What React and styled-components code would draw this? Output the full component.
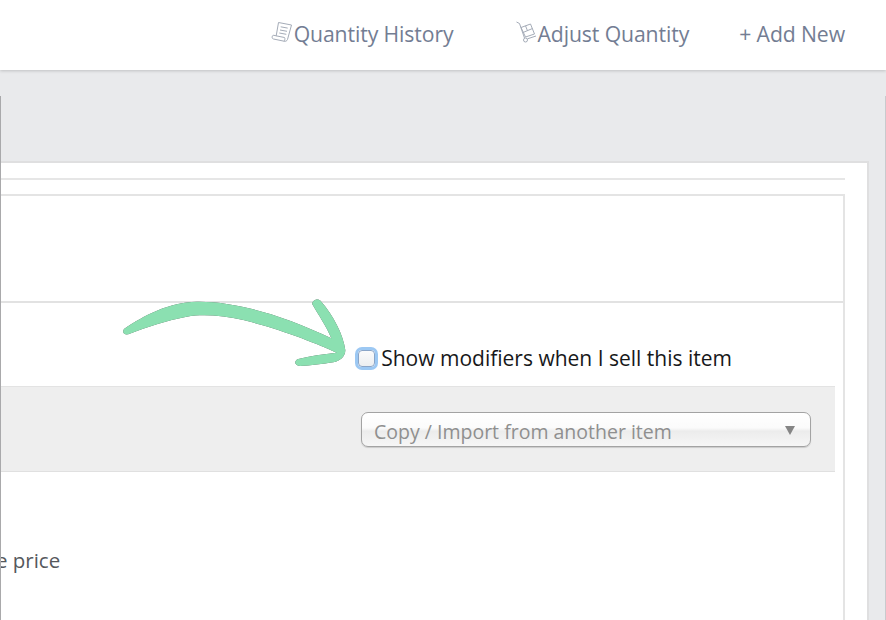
import React from "react";
import styled, { createGlobalStyle } from "styled-components";

const Global = createGlobalStyle`
  html, body { margin: 0; padding: 0; width: 886px; height: 620px; overflow: hidden; background: #e9eaec; font-family: "Open Sans", "Noto Sans", sans-serif; }
  * { box-sizing: border-box; }
`;
const Page = styled.div`position: relative; width: 886px; height: 620px; overflow: hidden; background: #e9eaec;`;
const Header = styled.header`
  position: relative; z-index: 1; height: 70px; background: #fff; box-shadow: 0 1px 3px rgba(0,0,0,.18);
  display: flex; justify-content: flex-end; align-items: center; padding: 0 41px 3px 0;
`;
const NavItem = styled.a`display: flex; align-items: center; gap: ${p => p.$gap}px; margin-left: ${p => p.$space}px; font-size: 21.2px; color: #737d93; letter-spacing: -.1px; white-space: nowrap;`;
const NavIcon = styled.svg`width: 22px; height: 22px; flex: none; fill: none; stroke: #a5acb8; stroke-width: 1; margin-top: -3px;`;
const Main = styled.main`
  margin-top: 26px; height: 524px; border-left: 1px solid #a9a9ab; border-right: 1px solid #c9cacd; padding: 65px 16px 0 0;
`;
const Card = styled.section`background: #fff; height: 461px; border: 2px solid #dfdfe0; border-left: 0; border-bottom: 0; padding: 15px 22px 0 0;`;
const Rule = styled.div`height: 2px; background: #e6e6e6;`;
const Box = styled.div`margin-top: 14px; height: 431px; border: 2px solid #e4e4e4; border-left: 0; border-bottom: 0; padding-right: 8px;`;
const BoxHead = styled.div`height: 107px; border-bottom: 2px solid #e2e2e2; margin-right: -8px;`;
const CheckRow = styled.div`height: 83px; display: flex; align-items: center; justify-content: flex-end; padding: 27px 103px 0 0; gap: 6px;`;
const Check = styled.span`width: 17px; height: 17px; border-radius: 4px; border: 1px solid #8aa5c8; background: linear-gradient(#fbfbfc,#eceef0); box-shadow: 0 0 0 3px #9cc8f3;`;
const CheckLabel = styled.label`font-size: 21px; color: #17181a; white-space: nowrap;`;
const Band = styled.div`height: 86px; background: #eeeeee; border-top: 1px solid #e3e3e3; border-bottom: 1px solid #e0e0e0; display: flex; justify-content: flex-end; align-items: center; padding: 0 24px 0 0;`;
const SelectBox = styled.div`
  width: 450px; height: 35px; border: 1px solid #a3a3a3; border-radius: 7px; display: flex; align-items: center; justify-content: space-between;
  padding: 5px 15px 0 12px; background: linear-gradient(#ffffff 0%, #fbfbfb 45%, #ececec 55%, #f6f6f6 100%); box-shadow: 0 1px 1px rgba(0,0,0,.15);
  font-size: 19.5px; color: #8f8f8f; white-space: nowrap;
`;
const Caret = styled.span`width: 0; height: 0; border-left: 5px solid transparent; border-right: 5px solid transparent; border-top: 9px solid #858585; margin-top: -3px;`;
const PriceRow = styled.div`padding: 74px 0 0; overflow: hidden; font-size: 20.5px; color: #55585c; line-height: 28px;`;
const PriceText = styled.span`display: block; margin-left: -25px; white-space: nowrap;`;
const Arrow = styled.svg`position: absolute; left: 110px; top: 285px; width: 290px; height: 100px; pointer-events: none; filter: drop-shadow(.8px .8px .6px rgba(50,50,50,.8));`;

export default function App() {
  return (
    <Page>
      <Global />
      <Header>
        <NavItem $gap={1} $space={0}>
          <NavIcon viewBox="0 0 22 22">
            <path d="M7.500 1.500 20.500 4 16.500 18.500c-.5 1.500-2 2-3.500 1.700L2.500 18c-1.800-.4-1.800-2.800-.3-3.800l3 .6Z" />
            <path d="M5 14.800 13.500 16.500c.8.8.3 2.800-.5 3.700M9.700 5.800l7 1.300M9 9l7 1.300M8.300 12l7 1.300" />
          </NavIcon>
          Quantity History
        </NavItem>
        <NavItem $gap={1} $space={61}>
          <NavIcon viewBox="0 0 22 22">
            <path d="M1.500 1 4.500 2.500 9.500 17" />
            <circle cx="10.500" cy="19" r="2" />
            <path d="M12.500 17.800 21 15M6 6.500l9.500-3.500 4 10L10.500 16ZM8 11.500l9.500-4M10.500 4.800l2 5" />
          </NavIcon>
          Adjust Quantity
        </NavItem>
        <NavItem $gap={0} $space={50}>+ Add New</NavItem>
      </Header>
      <Main>
        <Card>
          <Rule />
          <Box>
            <BoxHead />
            <CheckRow>
              <Check />
              <CheckLabel>Show modifiers when I sell this item</CheckLabel>
            </CheckRow>
            <Band>
              <SelectBox>
                Copy / Import from another item
                <Caret />
              </SelectBox>
            </Band>
            <PriceRow><PriceText>the price</PriceText></PriceRow>
          </Box>
        </Card>
      </Main>
      <Arrow viewBox="0 0 870 300">
        <path fill="#8be0b1" d="M42 132C100 92 180 50 260 50C380 48 530 95 664 160C650 125 625 90 607 58C605 45 625 38 632 48C670 90 700 150 706 195C706 215 690 228 670 232C640 236 600 243 570 243C552 243 552 226 565 222C600 212 640 208 680 203C625 178 520 135 400 105C340 92 280 86 230 95C170 107 110 125 55 148C42 150 36 142 42 132Z" />
      </Arrow>
    </Page>
  );
}
